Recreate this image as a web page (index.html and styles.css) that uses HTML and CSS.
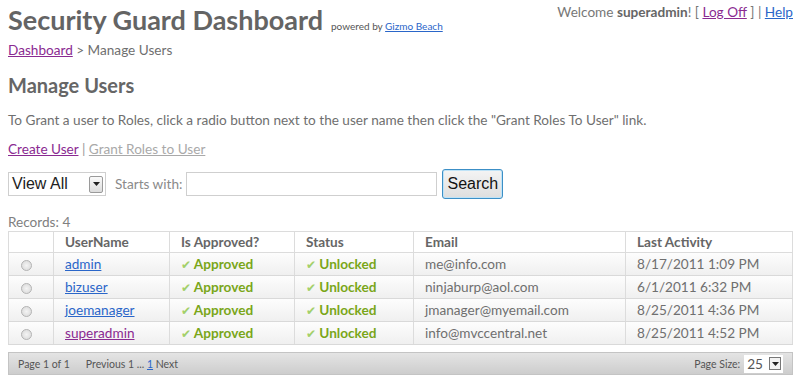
FILE: index.html
```html
<!DOCTYPE html>
<html>
<head>
	<title>Manage Users</title>
	<link rel="stylesheet" href="styles.css">
</head>
<body>
	<div class="header">
		<div class="title">
			<h1>Security Guard Dashboard</h1>
			<span class="powered">powered by <a href="#" class="link">Gizmo Beach</a></span>
		</div>
		<div class="login">Welcome <b>superadmin</b>! [ <a href="#" class="visited">Log Off</a> ] | <a href="#" class="link">Help</a></div>
	</div>

	<div class="crumbs"><a href="#" class="visited">Dashboard</a> &gt; Manage Users</div>

	<h2>Manage Users</h2>
	<p class="intro">To Grant a user to Roles, click a radio button next to the user name then click the "Grant Roles To User" link.</p>

	<div class="actions">
		<a href="#" class="visited">Create User</a> | <a href="#" class="disabled">Grant Roles to User</a>
	</div>

	<div class="filter">
		<div class="select">
			<span>View All</span>
			<span class="drop"><svg width="7" height="4" viewBox="0 0 7 4"><path d="M0 0h7L3.5 4z" fill="#222"/></svg></span>
		</div>
		<label>Starts with:</label>
		<div class="textbox"></div>
		<button class="search">Search</button>
	</div>

	<div class="records">Records: 4</div>

	<table class="grid">
		<colgroup>
			<col class="w-sel">
			<col class="w-user">
			<col class="w-appr">
			<col class="w-stat">
			<col class="w-mail">
			<col>
		</colgroup>
		<thead>
			<tr>
				<th class="sel"></th>
				<th>UserName</th>
				<th>Is Approved?</th>
				<th>Status</th>
				<th>Email</th>
				<th>Last Activity</th>
			</tr>
		</thead>
		<tbody>
			<tr>
				<td class="sel"><span class="radio"></span></td>
				<td><a href="#" class="link">admin</a></td>
				<td class="ok"><span class="tick">&#10004;</span> Approved</td>
				<td class="ok"><span class="tick">&#10004;</span> Unlocked</td>
				<td>me@info.com</td>
				<td>8/17/2011 1:09 PM</td>
			</tr>
			<tr>
				<td class="sel"><span class="radio"></span></td>
				<td><a href="#" class="link">bizuser</a></td>
				<td class="ok"><span class="tick">&#10004;</span> Approved</td>
				<td class="ok"><span class="tick">&#10004;</span> Unlocked</td>
				<td>ninjaburp@aol.com</td>
				<td>6/1/2011 6:32 PM</td>
			</tr>
			<tr>
				<td class="sel"><span class="radio"></span></td>
				<td><a href="#" class="link">joemanager</a></td>
				<td class="ok"><span class="tick">&#10004;</span> Approved</td>
				<td class="ok"><span class="tick">&#10004;</span> Unlocked</td>
				<td>jmanager@myemail.com</td>
				<td>8/25/2011 4:36 PM</td>
			</tr>
			<tr>
				<td class="sel"><span class="radio"></span></td>
				<td><a href="#" class="visited">superadmin</a></td>
				<td class="ok"><span class="tick">&#10004;</span> Approved</td>
				<td class="ok"><span class="tick">&#10004;</span> Unlocked</td>
				<td>info@mvccentral.net</td>
				<td>8/25/2011 4:52 PM</td>
			</tr>
		</tbody>
	</table>

	<div class="pager">
		<div class="pages">
			<span>Page 1 of 1</span>
			<span class="nav">Previous 1 ... <a href="#" class="link">1</a> Next</span>
		</div>
		<div class="size">
			Page Size:
			<div class="mini-select">
				<span>25</span>
				<span class="drop"><svg width="7" height="4" viewBox="0 0 7 4"><path d="M0 0h7L3.5 4z" fill="#222"/></svg></span>
			</div>
		</div>
	</div>
</body>
</html>
```

FILE: styles.css
```css
body {
	margin: 0;
	padding: 0 7px 0 8px;
	font: 13.6px Lato, "Open Sans", sans-serif;
	color: #6f6f6f;
	background: #fff;
}
a.link { color: #2a66c9; }
a.visited { color: #8a2a91; }
a.disabled { color: #a9a9a9; }

.header {
	display: flex;
	justify-content: space-between;
	align-items: flex-start;
	height: 38px;
}
.title {
	display: flex;
	align-items: baseline;
	gap: 8px;
}
h1 {
	margin: 0;
	font-size: 27px;
	line-height: 40px;
	font-weight: bold;
	color: #646464;
}
.powered {
	font-size: 10px;
	color: #555;
}
.login {
	padding-top: 4px;
	color: #777;
}
.login b { color: #666; }

.crumbs {
	margin-top: 1px;
	line-height: 22px;
	color: #6f6f6f;
}

h2 {
	margin: 11px 0 0;
	font-size: 20px;
	line-height: 26px;
	color: #666;
}
.intro {
	margin: 12px 0 0;
	line-height: 20px;
}
.actions {
	margin-top: 9px;
	line-height: 20px;
	color: #999;
}

.filter {
	display: flex;
	align-items: center;
	margin-top: 10px;
	height: 30px;
}
.select {
	display: flex;
	align-items: center;
	justify-content: space-between;
	height: 24px;
	padding: 0 2px 0 3px;
	border: 1px solid #cfcfcf;
	box-sizing: border-box;
	width: 98px;
	font: 16px "Liberation Sans", Arial, sans-serif;
	color: #222;
}
.drop {
	display: flex;
	align-items: center;
	justify-content: center;
	width: 12px;
	height: 15px;
	border: 1px solid #9a9a9a;
	background: linear-gradient(#fafafa, #dcdcdc);
	border-radius: 2px;
}
.filter label {
	margin: 0 4px 0 9px;
	color: #8a8a8a;
}
.textbox {
	width: 251px;
	height: 24px;
	box-sizing: border-box;
	border: 1px solid #cfcfcf;
}
.search {
	margin-left: 5px;
	width: 61px;
	height: 30px;
	border: 1px solid #3c8fc6;
	border-radius: 3px;
	background: linear-gradient(#f4f4f4, #dedede);
	box-shadow: inset 0 0 0 1px #bfe3f7;
	font: 16px "Liberation Sans", Arial, sans-serif;
	color: #111;
	padding: 0;
}

.records {
	margin-top: 15px;
	line-height: 17px;
	color: #808080;
}

.grid {
	width: 100%;
	table-layout: fixed;
	border-collapse: collapse;
	border: 1px solid #dcdcdc;
}
.w-sel { width: 45px; }
.w-user { width: 116px; }
.w-appr { width: 125px; }
.w-stat { width: 119px; }
.w-mail { width: 212px; }
.grid th, .grid td {
	border: 1px solid #dcdcdc;
	border-width: 0 1px 1px 0;
	padding: 0 0 0 11px;
	text-align: left;
	height: 22px;
	white-space: nowrap;
	overflow: hidden;
}
.grid th {
	color: #666;
	font-weight: bold;
	height: 20px;
	background: #fff;
}
.grid tbody tr {
	background: linear-gradient(#fdfdfd, #efefef);
}
.grid tbody td { border-bottom-color: #d9d9d9; }
.grid .sel { padding: 0 0 0 12px; }
.ok {
	color: #7aa619;
	font-weight: bold;
}
.tick {
	color: #a3d06a;
	font-size: 12px;
	font-weight: normal;
}
.radio {
	display: inline-block;
	width: 9px;
	height: 9px;
	border: 1px solid #b4b4b4;
	border-radius: 50%;
	background: radial-gradient(#f4f4f4, #d6d6d6);
	vertical-align: middle;
}

.pager {
	display: flex;
	justify-content: space-between;
	align-items: center;
	margin-top: 7px;
	height: 21px;
	padding: 0 9px;
	border: 1px solid #c4c4c4;
	background: linear-gradient(#e4e4e4, #cdcdcd);
	font-size: 10.5px;
	color: #555;
}
.pages { display: flex; gap: 16px; }
.size {
	display: flex;
	align-items: center;
	gap: 4px;
}
.mini-select {
	display: flex;
	align-items: center;
	gap: 6px;
	height: 18px;
	padding: 0 2px 0 3px;
	background: #fff;
	font-size: 13.6px;
	color: #555;
}
.mini-select .drop {
	width: 10px;
	height: 11px;
	background: #f2f2f2;
	border-color: #777;
	border-radius: 0;
}
```
